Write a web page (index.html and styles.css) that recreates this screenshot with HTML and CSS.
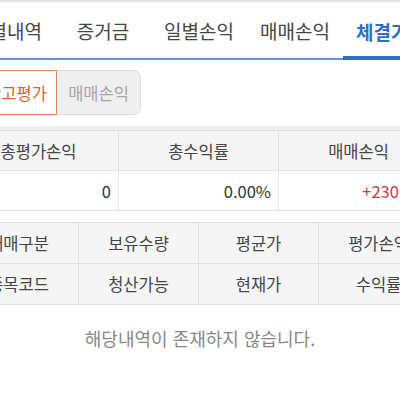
FILE: index.html
```html
<!DOCTYPE html>
<html lang="ko">
<head>
<meta charset="utf-8">
<link rel="stylesheet" href="styles.css">
</head>
<body>
<div class="page">
  <nav class="tabs">
    <div class="tab">일별내역</div>
    <div class="tab">증거금</div>
    <div class="tab">일별손익</div>
    <div class="tab">매매손익</div>
    <div class="tab active">체결가능</div>
  </nav>
  <div class="seg-wrap">
    <div class="seg">
      <div class="seg-btn on">잔고평가</div>
      <div class="seg-btn off">매매손익</div>
    </div>
  </div>
  <div class="sep"></div>
  <div class="sum">
    <div class="cell head">총평가손익</div>
    <div class="cell head">총수익률</div>
    <div class="cell head">매매손익</div>
    <div class="cell num">0</div>
    <div class="cell num">0.00%</div>
    <div class="cell num red">+230,000</div>
  </div>
  <div class="grid4">
    <div class="cell head">매매구분</div>
    <div class="cell head">보유수량</div>
    <div class="cell head">평균가</div>
    <div class="cell head">평가손익</div>
    <div class="cell head">종목코드</div>
    <div class="cell head">청산가능</div>
    <div class="cell head">현재가</div>
    <div class="cell head">수익률</div>
  </div>
  <p class="empty">해당내역이 존재하지 않습니다.</p>
</div>
</body>
</html>
```
FILE: styles.css
```css
html, body {
  margin: 0;
  padding: 0;
  background: #fff;
  overflow: hidden;
  width: 400px;
  height: 400px;
}
body {
  font-family: "Noto Sans CJK KR", "Noto Sans", sans-serif;
  color: #444;
}
.page {
  width: 480px;
  margin-left: -41px;
}
.tabs {
  display: grid;
  grid-template-columns: repeat(5, 96px);
  border-top: 2px solid #e6e6e6;
  border-bottom: 2px solid #5b97d8;
  height: 56px;
}
.tab {
  display: flex;
  align-items: center;
  justify-content: center;
  font-size: 19px;
  color: #454545;
}
.tab.active {
  color: #2f6fc4;
  font-weight: bold;
  box-shadow: inset 0 -4px 0 #2f6fc4;
  margin-bottom: -2px;
}
.seg-wrap {
  padding: 10px 0 11px 17px;
}
.seg {
  display: flex;
  height: 45px;
}
.seg-btn {
  display: flex;
  align-items: center;
  justify-content: center;
  font-size: 16.5px;
  box-sizing: border-box;
}
.seg-btn.on {
  width: 81px;
  color: #d9622c;
  border: 1px solid #e0855a;
  border-radius: 6px 0 0 6px;
}
.seg-btn.off {
  width: 84px;
  color: #a6a6a6;
  background: #efefef;
  border: 1px solid #dcdcdc;
  border-left: none;
  border-radius: 0 8px 8px 0;
}
.sep {
  height: 4px;
  background: #f0f0f0;
}
.sum {
  display: grid;
  grid-template-columns: repeat(3, 160px);
  grid-auto-rows: 40px;
  border-top: 1px solid #dedede;
}
.grid4 {
  display: grid;
  grid-template-columns: repeat(4, 120px);
  grid-auto-rows: 41px;
  margin-top: 11px;
  border-top: 1px solid #dedede;
}
.cell {
  display: flex;
  align-items: center;
  justify-content: center;
  font-size: 16.5px;
  color: #454545;
  border-right: 1px solid #e2e2e2;
  border-bottom: 1px solid #e2e2e2;
  box-sizing: border-box;
}
.cell.head {
  background: #f5f5f5;
}
.cell.num {
  justify-content: flex-end;
  padding-right: 7px;
  color: #333;
  background: #fff;
}
.cell.red {
  color: #d9343a;
}
.empty {
  margin: 20px 0 0;
  text-align: center;
  font-size: 18px;
  color: #888;
  padding-left: 2px;
}
```
